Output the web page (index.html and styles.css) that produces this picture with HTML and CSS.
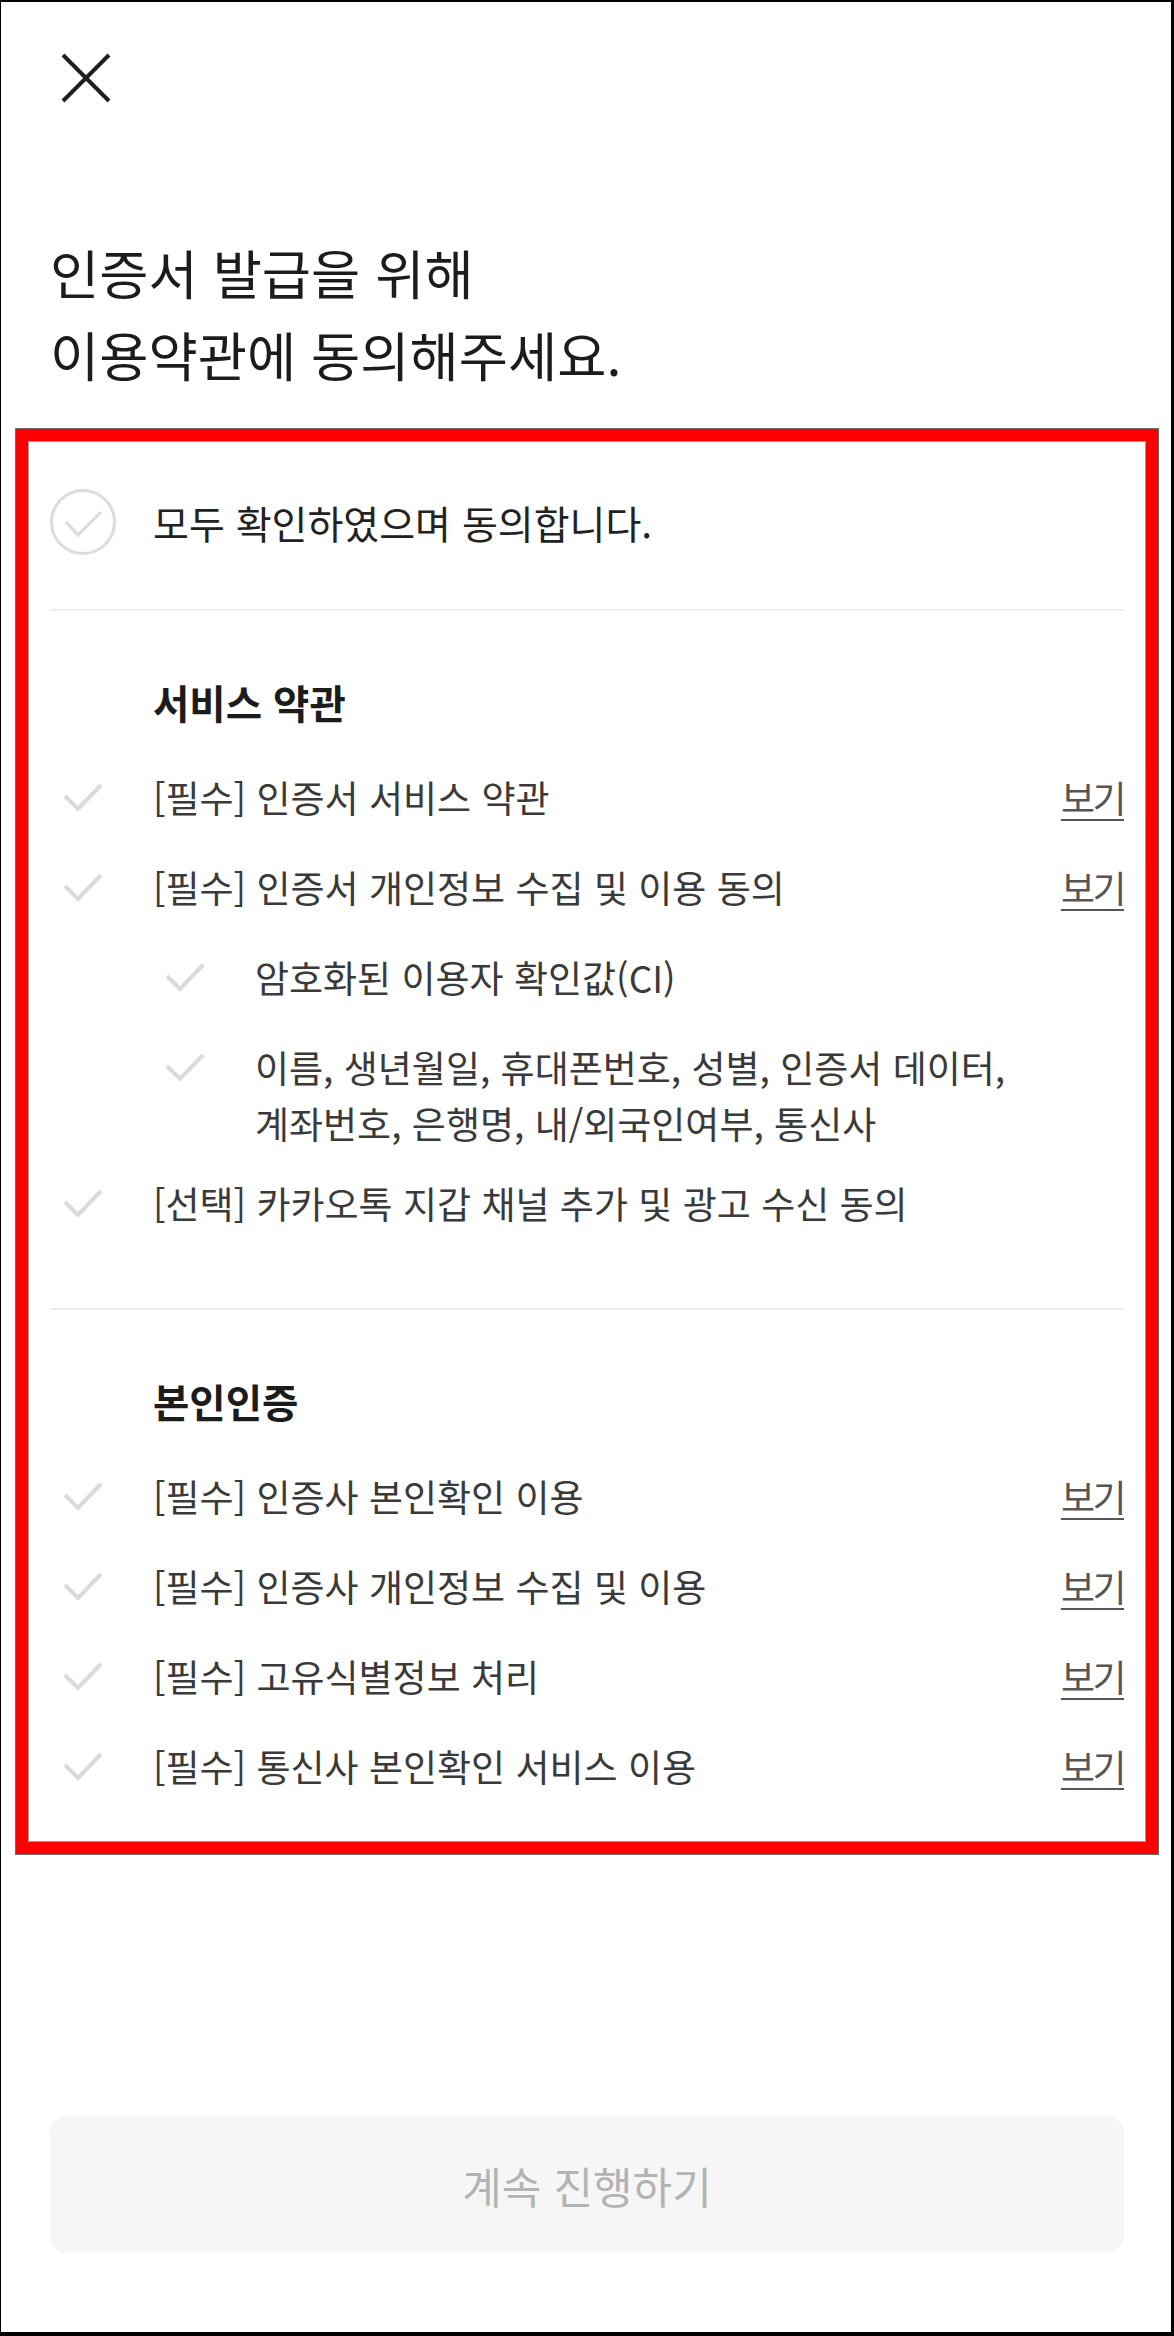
FILE: index.html
```html
<!DOCTYPE html>
<html lang="ko">
<head>
<meta charset="utf-8">
<title>이용약관 동의</title>
<link rel="stylesheet" href="styles.css">
</head>
<body>
<div class="page">
  <header class="top">
    <button class="close" type="button" aria-label="닫기">
      <svg viewBox="0 0 50 50" width="50" height="50"><path d="M2 2 L48 48 M48 2 L2 48" fill="none" stroke="#1f1f1f" stroke-width="4"/></svg>
    </button>
  </header>

  <h1 class="title">인증서 발급을 위해<br>이용약관에 동의해주세요.</h1>

  <section class="agree-box">
    <div class="all-agree">
      <span class="circle-check">
        <svg viewBox="0 0 66 66" width="66" height="66"><circle cx="33" cy="33" r="31.5" fill="none" stroke="#dcdcdc" stroke-width="3"/><polyline points="16,33 28,46 51,23" fill="none" stroke="#dcdcdc" stroke-width="3"/></svg>
      </span>
      <span class="all-text">모두 확인하였으며 동의합니다.</span>
    </div>

    <div class="group">
      <h2 class="group-title">서비스 약관</h2>
      <ul class="terms">
        <li class="term">
          <span class="chk"><svg viewBox="0 0 40 30" width="40" height="30"><polyline points="2,14 15,27 38,3" fill="none" stroke="#dadada" stroke-width="4"/></svg></span>
          <span class="label">[필수] 인증서 서비스 약관</span>
          <a class="view" href="#">보기</a>
        </li>
        <li class="term">
          <span class="chk"><svg viewBox="0 0 40 30" width="40" height="30"><polyline points="2,14 15,27 38,3" fill="none" stroke="#dadada" stroke-width="4"/></svg></span>
          <span class="label">[필수] 인증서 개인정보 수집 및 이용 동의</span>
          <a class="view" href="#">보기</a>
        </li>
        <li class="term sub">
          <span class="chk"><svg viewBox="0 0 40 30" width="40" height="30"><polyline points="2,14 15,27 38,3" fill="none" stroke="#dadada" stroke-width="4"/></svg></span>
          <span class="label">암호화된 이용자 확인값(CI)</span>
        </li>
        <li class="term sub">
          <span class="chk"><svg viewBox="0 0 40 30" width="40" height="30"><polyline points="2,14 15,27 38,3" fill="none" stroke="#dadada" stroke-width="4"/></svg></span>
          <span class="label">이름, 생년월일, 휴대폰번호, 성별, 인증서 데이터,<br>계좌번호, 은행명, 내/외국인여부, 통신사</span>
        </li>
        <li class="term">
          <span class="chk"><svg viewBox="0 0 40 30" width="40" height="30"><polyline points="2,14 15,27 38,3" fill="none" stroke="#dadada" stroke-width="4"/></svg></span>
          <span class="label">[선택] 카카오톡 지갑 채널 추가 및 광고 수신 동의</span>
        </li>
      </ul>
    </div>

    <div class="group last">
      <h2 class="group-title">본인인증</h2>
      <ul class="terms">
        <li class="term">
          <span class="chk"><svg viewBox="0 0 40 30" width="40" height="30"><polyline points="2,14 15,27 38,3" fill="none" stroke="#dadada" stroke-width="4"/></svg></span>
          <span class="label">[필수] 인증사 본인확인 이용</span>
          <a class="view" href="#">보기</a>
        </li>
        <li class="term">
          <span class="chk"><svg viewBox="0 0 40 30" width="40" height="30"><polyline points="2,14 15,27 38,3" fill="none" stroke="#dadada" stroke-width="4"/></svg></span>
          <span class="label">[필수] 인증사 개인정보 수집 및 이용</span>
          <a class="view" href="#">보기</a>
        </li>
        <li class="term">
          <span class="chk"><svg viewBox="0 0 40 30" width="40" height="30"><polyline points="2,14 15,27 38,3" fill="none" stroke="#dadada" stroke-width="4"/></svg></span>
          <span class="label">[필수] 고유식별정보 처리</span>
          <a class="view" href="#">보기</a>
        </li>
        <li class="term">
          <span class="chk"><svg viewBox="0 0 40 30" width="40" height="30"><polyline points="2,14 15,27 38,3" fill="none" stroke="#dadada" stroke-width="4"/></svg></span>
          <span class="label">[필수] 통신사 본인확인 서비스 이용</span>
          <a class="view" href="#">보기</a>
        </li>
      </ul>
    </div>
  </section>

  <footer class="bottom">
    <button class="next" type="button">계속 진행하기</button>
  </footer>
</div>
</body>
</html>
```

FILE: styles.css
```css
* {
  box-sizing: border-box;
}

html, body {
  margin: 0;
  padding: 0;
  background: #ffffff;
}

body {
  font-family: "Noto Sans CJK KR", "Noto Sans", sans-serif;
  color: #333333;
}

.page {
  width: 1174px;
  height: 2336px;
  border-style: solid;
  border-color: #000000;
  border-width: 2px 3px 4px 1px;
  background: #ffffff;
  overflow: hidden;
}

.top {
  padding: 51px 0 0 60px;
}

.close {
  display: block;
  width: 50px;
  height: 50px;
  padding: 0;
  border: 0;
  background: none;
}

.close svg {
  display: block;
}

.title {
  margin: 128px 0 0;
  padding-left: 49px;
  font-size: 53.5px;
  font-weight: 400;
  line-height: 82px;
  color: #1c1c1c;
}

.agree-box {
  margin: 34px 13px 0 15px;
  padding: 0 22px;
  border: 12px solid #ff0000;
  box-shadow: 0 0 0 1px #6b6b6b, inset 0 0 0 1px #9a9a9a;
}

.all-agree {
  display: flex;
  align-items: center;
  padding: 48px 0 54px;
  border-bottom: 2px solid #eeeeee;
}

.circle-check {
  display: flex;
  width: 66px;
  height: 66px;
}

.all-text {
  margin-left: 37px;
  font-size: 39px;
  line-height: 56px;
  color: #222222;
}

.group {
  padding: 62px 0 60px;
  border-bottom: 2px solid #eeeeee;
}

.group.last {
  padding-bottom: 31px;
  border-bottom: 0;
}

.group-title {
  margin: 0 0 22px;
  padding-left: 103px;
  font-size: 39.5px;
  font-weight: 700;
  line-height: 57px;
  color: #1c1c1c;
}

.terms {
  list-style: none;
  margin: 0;
  padding: 0;
}

.term {
  display: flex;
  align-items: flex-start;
  padding: 17px 0;
  font-size: 37px;
  line-height: 56px;
  color: #3a3a3a;
}

.term.sub {
  padding: 17px 0 7px 102px;
}

.term.sub + .term.sub {
  margin-top: 10px;
}

.chk {
  flex: none;
  display: flex;
  align-items: center;
  justify-content: center;
  width: 66px;
  height: 56px;
}

.chk svg {
  display: block;
}

.label {
  flex: 1;
  margin-left: 37px;
}

.view {
  flex: none;
  margin-left: 20px;
  color: #555555;
  letter-spacing: -2.5px;
  text-decoration: underline;
  text-underline-offset: 6px;
  text-decoration-thickness: 2px;
}

.bottom {
  padding: 262px 47px 0 49px;
}

.next {
  display: block;
  width: 100%;
  height: 137px;
  border: 0;
  border-radius: 16px;
  background: #f6f6f6;
  font-family: "Noto Sans CJK KR", "Noto Sans", sans-serif;
  font-size: 43px;
  color: #b3b3b3;
}
```
